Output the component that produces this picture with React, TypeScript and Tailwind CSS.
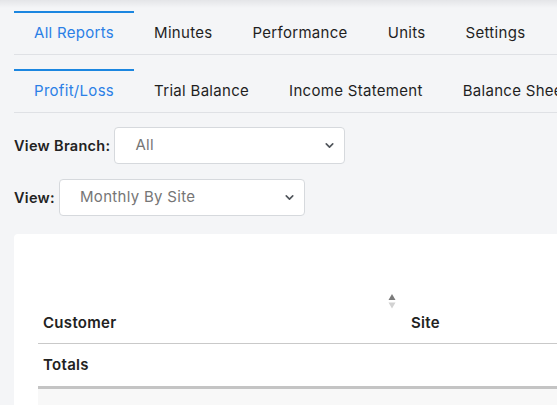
import { ChevronDown } from "lucide-react";

// Reports screen: two rows of tabs, branch/view filters, then the P/L table card.

const mainTabs = ["All Reports", "Minutes", "Performance", "Units", "Settings"];
const subTabs = ["Profit/Loss", "Trial Balance", "Income Statement", "Balance Sheet"];

function TabRow({ tabs, active }: { tabs: string[]; active: string }) {
  return (
    <div className="ml-[14px] flex whitespace-nowrap border-b border-[#dfe1e5]">
      {tabs.map((t) => (
        <div
          key={t}
          className={
            t === active
              ? "h-[43px] px-5 flex items-center border-t-2 border-[#1b86e0] text-[#2b7fe6]"
              : "h-[43px] px-5 flex items-center border-t-2 border-transparent text-[#1f1f1f]"
          }
        >
          {t}
        </div>
      ))}
    </div>
  );
}

function FakeSelect({ value, width }: { value: string; width: string }) {
  return (
    <div
      className={`${width} h-[37px] bg-white border border-[#d6d9dd] rounded-[4px] flex items-center justify-between pl-5 pr-2 text-[#767676]`}
    >
      <span>{value}</span>
      <ChevronDown size={13} strokeWidth={3} className="text-[#50555b]" />
    </div>
  );
}

function SortIcon() {
  return (
    <svg width="8" height="16" viewBox="0 0 8 16" className="absolute">
      <path d="M4 0 L7.5 6 L0.5 6 Z" fill="#7a7a7a" />
      <path d="M0.5 8.5 L7.5 8.5 L4 14.5 Z" fill="#d2d2d2" />
    </svg>
  );
}

export default function App() {
  return (
    <div
      className="w-[557px] h-[405px] overflow-hidden bg-[#f4f5f7] text-[15px] tracking-[0.3px] relative"
      style={{ fontFamily: "Inter, 'Noto Sans', sans-serif" }}
    >
      <div className="absolute top-0 left-0 right-0 h-[8px] bg-gradient-to-b from-[#e4e5e8] to-[#f4f5f7]" />
      <div className="relative pt-[11px]">
        <TabRow tabs={mainTabs} active="All Reports" />
        <div className="mt-[14px]">
          <TabRow tabs={subTabs} active="Profit/Loss" />
        </div>

        <div className="ml-[14px] mt-[14px] flex items-center gap-[4px]">
          <span className="text-[14.5px] font-semibold text-[#222]">View Branch:</span>
          <FakeSelect value="All" width="w-[231px]" />
        </div>
        <div className="ml-[14px] mt-[15px] flex items-center gap-[4px]">
          <span className="text-[14.5px] font-semibold text-[#222]">View:</span>
          <FakeSelect value="Monthly By Site" width="w-[246px]" />
        </div>

        <div className="ml-[14px] mt-[18px] w-[800px] h-[300px] bg-white rounded-tl-[4px] pl-[24px] pt-[59px]">
          <div className="flex h-[51px] border-b border-[#c9c9c9] items-end pb-[9px] font-semibold text-[#222]">
            <div className="relative w-[367px] pl-[5px]">
              Customer
              <span className="absolute right-[9px] -top-[18px] w-[8px] h-[16px]">
                <SortIcon />
              </span>
            </div>
            <div className="relative w-[160px] pl-[6px]">
              Site
              <span className="absolute -right-[2px] -top-[18px] w-[8px] h-[16px]">
                <SortIcon />
              </span>
            </div>
          </div>
          <div className="h-[45px] flex items-center pl-[5px] font-semibold text-[#222] border-b-[3px] border-[#c4c4c4]">
            Totals
          </div>
          <div className="h-[40px] bg-[#f8f8f8]" />
        </div>
      </div>
    </div>
  );
}
